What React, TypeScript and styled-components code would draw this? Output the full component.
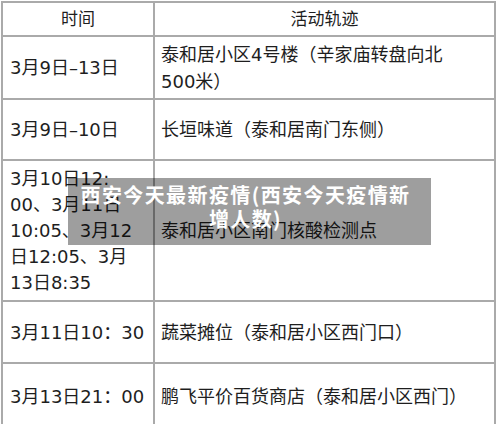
import React from 'react'
import styled, { createGlobalStyle } from 'styled-components'

const Global = createGlobalStyle`
	html, body {
		margin: 0;
		padding: 0;
		background: #fff;
	}
	body {
		font-family: 'DejaVu Sans', 'Noto Sans CJK SC', sans-serif;
		color: #1e1e1e;
	}
`

const Page = styled.div`
	position: relative;
	padding: 1px 0 0 1px;
	width: 496px;
`

const Table = styled.table`
	border-collapse: collapse;
	width: 495px;
	table-layout: fixed;
`

const HeadCell = styled.th`
	border: 2px solid #aaa;
	font-weight: 400;
	font-size: 17px;
	height: 32px;
	padding: 0;
	text-align: center;
	vertical-align: middle;
	line-height: 1;
`

const Cell = styled.td<{ $h: number }>`
	border: 2px solid #aaa;
	height: ${p => p.$h}px;
	padding: 0 4px 0 7px;
	font-size: 18px;
	line-height: 27px;
	vertical-align: middle;
	white-space: nowrap;
	&:nth-child(2) {
		padding-left: 6px;
	}
`

const Wrapped = styled.span`
	display: block;
	line-height: 26px;
	white-space: nowrap;
`

const Banner = styled.div`
	position: absolute;
	left: 68px;
	top: 178px;
	width: 363px;
	height: 67px;
	box-sizing: border-box;
	padding: 5px 8px 0 0;
	background: rgba(0, 0, 0, 0.38);
	color: #fff;
	font-family: 'Noto Sans CJK SC', sans-serif;
	font-weight: 700;
	font-size: 20px;
	letter-spacing: 1.4px;
	line-height: 24px;
	text-align: center;
`

const rows: { time: React.ReactNode; place: React.ReactNode; h: number }[] = [
	{ time: '3月9日–13日', place: <>泰和居小区4号楼（辛家庙转盘向北<br />500米）</>, h: 61 },
	{ time: '3月9日–10日', place: '长垣味道（泰和居南门东侧）', h: 59 },
	{
		time: (
			<Wrapped>
				3月10日12:<br />00、3月11日<br />10:05、3月12<br />日12:05、3月<br />13日8:35
			</Wrapped>
		),
		place: '泰和居小区南门核酸检测点',
		h: 139,
	},
	{ time: '3月11日10：30', place: '蔬菜摊位（泰和居小区西门口）', h: 60 },
	{ time: '3月13日21：00', place: '鹏飞平价百货商店（泰和居小区西门）', h: 64 },
]

export default function App() {
	return (
		<>
			<Global />
			<Page>
				<Table>
					<colgroup>
						<col style={{ width: 152 }} />
						<col />
					</colgroup>
					<thead>
						<tr>
							<HeadCell>时间</HeadCell>
							<HeadCell>活动轨迹</HeadCell>
						</tr>
					</thead>
					<tbody>
						{rows.map((r, k) => (
							<tr key={k}>
								<Cell $h={r.h}>{r.time}</Cell>
								<Cell $h={r.h}>{r.place}</Cell>
							</tr>
						))}
					</tbody>
				</Table>
				<Banner>
					西安今天最新疫情(西安今天疫情新
					<br />
					增人数)
				</Banner>
			</Page>
		</>
	)
}
